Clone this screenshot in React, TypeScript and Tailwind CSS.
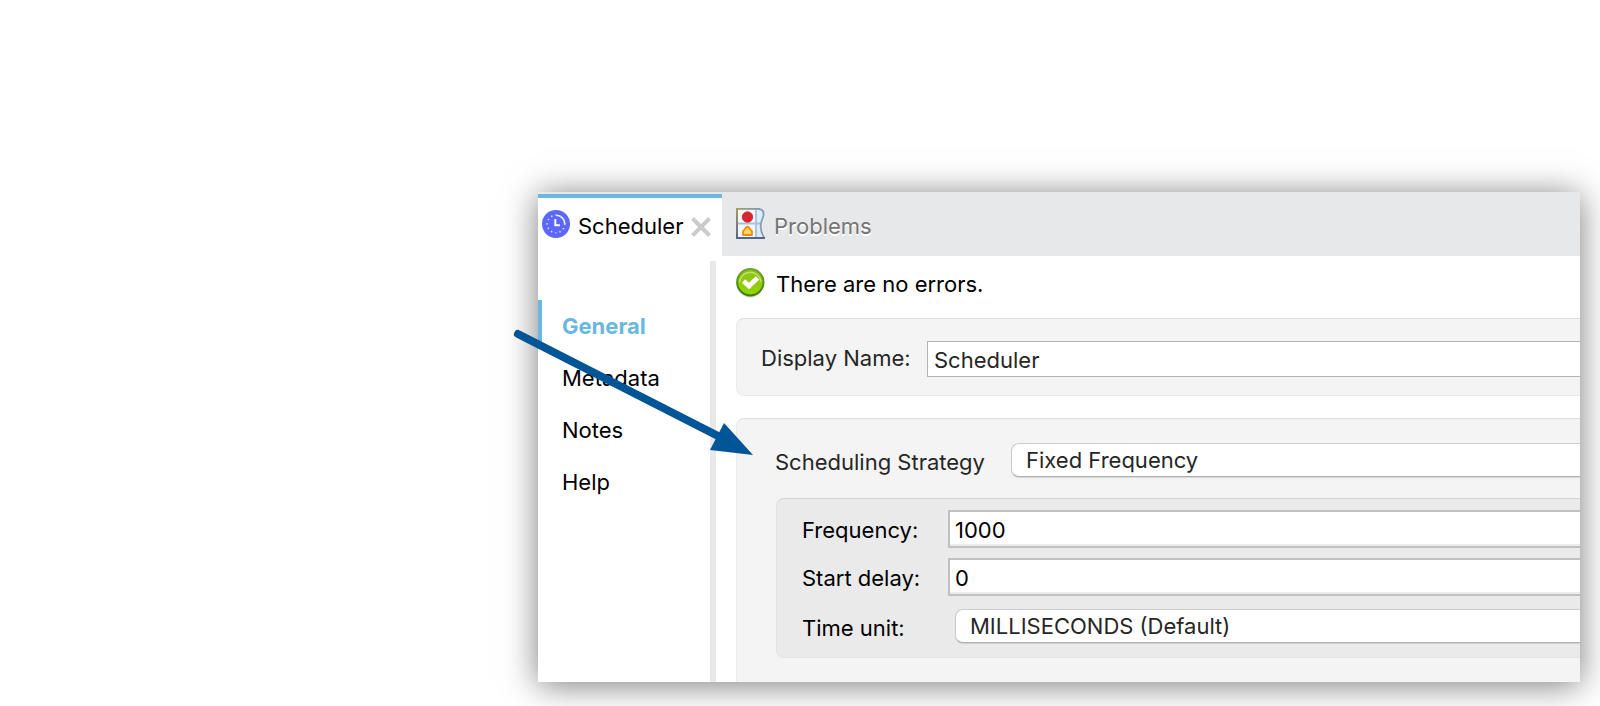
import React from "react";

const sections = ["General", "Metadata", "Notes", "Help"];

function ClockIcon() {
  return (
    <svg viewBox="0 0 29 29" className="size-7 shrink-0" aria-hidden="true">
      <circle cx="14.5" cy="14.5" r="14.5" fill="#5c67fb" />
      <path d="M14.5 5.4a9.1 9.1 0 0 1 9.1 9.1" fill="none" stroke="#fff" strokeWidth="1.7" />
      <path
        d="M14.5 23.6a9.1 9.1 0 1 1 9.1-9.1 9.1 9.1 0 0 1-9.1 9.1"
        fill="none"
        stroke="#d5d8ff"
        strokeWidth="1.6"
        strokeDasharray="1.6 3.17"
        strokeDashoffset="0.8"
      />
      <path d="M13.8 9.2v6.6h4.8" fill="none" stroke="#fff" strokeWidth="2" />
    </svg>
  );
}

function ProblemsIcon() {
  return (
    <svg viewBox="0 0 30 31" className="h-[31px] w-[30px] shrink-0" aria-hidden="true">
      <defs>
        <linearGradient id="frame" x1="0" y1="0" x2="0" y2="1">
          <stop offset="0" stopColor="#b09a5c" />
          <stop offset="1" stopColor="#52648f" />
        </linearGradient>
        <linearGradient id="edge" x1="0" y1="0" x2="1" y2="0">
          <stop offset="0" stopColor="#b09a5c" />
          <stop offset="1" stopColor="#8496b5" />
        </linearGradient>
      </defs>
      <path d="M1 1H23C28 1 28.5 6 26.5 10.5C23.500 17 24 23 28 30H1z" fill="#dceefa" />
      <path d="M2 2H19V29H2z" fill="#f3f8fb" />
      <path d="M20 2V29M2 15.5H24.500" stroke="#a9bfe0" strokeWidth="1.8" fill="none" />
      <path d="M23 1.2C28 1.2 28.5 6 26.5 10.5C23.500 17 24 23 28 29.500" stroke="#8799b8" strokeWidth="1.8" fill="none" />
      <path d="M0 0H24V1.800H0z" fill="url(#edge)" />
      <path d="M0 0H2V31H0z" fill="url(#frame)" />
      <path d="M0 29H29V31H0z" fill="#52648f" />
      <circle cx="11.5" cy="9" r="5.2" fill="#dc2430" stroke="#bd1f2d" strokeWidth="0.8" />
      <path d="M7 27V23.5L10 19.500Q11.500 18 13 19.500L16 23.500V27z" fill="#ffd75a" stroke="#f08a12" strokeWidth="1.800" strokeLinejoin="round" />
    </svg>
  );
}

function OkIcon() {
  return (
    <svg viewBox="0 0 30 30" className="size-[30px] shrink-0" aria-hidden="true">
      <defs>
        <linearGradient id="ok" x1="0" y1="0" x2="0" y2="1">
          <stop offset="0" stopColor="#8fbf1c" />
          <stop offset="1" stopColor="#8ed800" />
        </linearGradient>
        <linearGradient id="rim" x1="0" y1="0" x2="0" y2="1">
          <stop offset="0" stopColor="#6fa52c" />
          <stop offset="1" stopColor="#3f7d08" />
        </linearGradient>
      </defs>
      <ellipse cx="14.3" cy="16.5" rx="13" ry="13" fill="#000" opacity="0.18" />
      <circle cx="14.3" cy="14.2" r="13.2" fill="url(#ok)" stroke="url(#rim)" strokeWidth="2" />
      <path d="M3.500 14A10.800 10.800 0 0 1 25 14" fill="none" stroke="#d0e884" strokeWidth="1.300" opacity="0.8" />
      <path d="M7.500 13L13 18L21.500 10" fill="none" stroke="#fff" strokeWidth="4.800" />
    </svg>
  );
}

export default function App() {
  return (
    <div className="relative min-h-screen overflow-hidden bg-white pt-48 pr-5 pb-6 pl-[538px] font-['Inter','Liberation_Sans',sans-serif] text-[22px] leading-7 text-black">
      <div className="overflow-hidden bg-white shadow-[0_3px_32px_rgba(0,0,0,0.52)]">
        <header className="flex h-16 bg-[#e7e8ea] pt-0.5">
          <div className="flex w-[184px] shrink-0 items-center gap-2 border-t-4 border-[#6ab7df] bg-white pb-1.5 pl-1">
            <ClockIcon />
            <button type="button" className="pt-1">Scheduler</button>
            <button type="button" aria-label="Close Scheduler" className="pt-1.5">
              <svg viewBox="0 0 20 20" className="size-5" aria-hidden="true">
                <path d="M1.5 1.5l17 17M18.5 1.5l-17 17" stroke="#cbcbcb" strokeWidth="4" />
              </svg>
            </button>
          </div>
          <div className="flex items-center gap-2 pb-1 pl-3.5">
            <ProblemsIcon />
            <button type="button" className="pt-1.5 text-[#757575] [text-shadow:0_2px_0_#fff]">Problems</button>
          </div>
        </header>

        <div className="flex">
          <nav className="w-[172px] shrink-0 pt-11">
            {sections.map((name, i) => (
              <a
                key={name}
                href={"#" + name.toLowerCase()}
                className={
                  i === 0
                    ? "mb-1 flex h-12 items-center border-l-4 border-[#6ab7df] pt-1 pl-5 font-bold text-[#6ab7df]"
                    : "flex h-[52px] items-center pl-6"
                }
              >
                {name}
              </a>
            ))}
          </nav>
          <div className="mt-[5px] w-1.5 shrink-0 bg-[#e7e8ea]" />

          <main className="min-w-0 flex-1 pl-5">
            <div className="flex h-[62px] items-center gap-2.5 pb-2">
              <OkIcon />
              <span className="pt-0.5">There are no errors.</span>
            </div>

            <section className="flex h-[78px] items-center rounded-l-lg border border-r-0 border-[#ebebeb] border-t-[#dedede] bg-[#f4f4f4] pt-1 pl-6 text-[#262626]">
              <label htmlFor="display-name" className="w-[166px] shrink-0 pb-0.5">Display Name:</label>
              <input
                id="display-name"
                defaultValue="Scheduler"
                className="h-9 min-w-0 flex-1 border border-r-0 border-[#b4b4b4] bg-white pt-0.5 pl-1.5 outline-none"
              />
            </section>

            <section className="mt-[22px] rounded-tl-lg border-t border-l border-[#ebebeb] border-t-[#dedede] bg-[#f4f4f4] pt-6 pb-6 pl-[38px] text-[#262626]">
              <div className="flex h-[34px] items-center">
                <label htmlFor="strategy" className="w-[236px] shrink-0 pt-1">Scheduling Strategy</label>
                <select
                  id="strategy"
                  className="h-[34px] min-w-0 flex-1 appearance-none rounded-l-lg border border-r-0 border-[#cccccc] border-b-[#b0b0b0] bg-white pl-3.5 shadow-[0_1px_1px_rgba(0,0,0,0.12)] outline-none"
                >
                  <option>Fixed Frequency</option>
                </select>
              </div>

              <div className="mt-[21px] ml-px rounded-l-lg border border-r-0 border-[#e2e2e2] border-t-[#d4d4d4] bg-[#eaeaea] pt-[11px] pb-3.5 pl-[25px] text-black">
                <div className="flex items-center">
                  <label htmlFor="frequency" className="w-[146px] shrink-0 pt-0.5">Frequency:</label>
                  <input
                    id="frequency"
                    defaultValue="1000"
                    className="h-[38px] min-w-0 flex-1 border-2 border-r-0 border-[#c1c1c1] bg-white pt-0.5 pl-[5px] shadow-[inset_0_-2px_0_#ececec] outline-none"
                  />
                </div>
                <div className="mt-2.5 flex items-center">
                  <label htmlFor="delay" className="w-[146px] shrink-0 pt-0.5">Start delay:</label>
                  <input
                    id="delay"
                    defaultValue="0"
                    className="h-[38px] min-w-0 flex-1 border-2 border-r-0 border-[#c1c1c1] bg-white pt-0.5 pl-[5px] shadow-[inset_0_-2px_0_#ececec] outline-none"
                  />
                </div>
                <div className="mt-[13px] flex h-[34px] items-center">
                  <label htmlFor="unit" className="w-[153px] shrink-0 pt-1">Time unit:</label>
                  <select
                    id="unit"
                    className="h-[34px] min-w-0 flex-1 appearance-none rounded-l-lg border border-r-0 border-[#cccccc] border-b-[#b0b0b0] bg-white pl-3.5 text-[#262626] shadow-[0_1px_1px_rgba(0,0,0,0.12)] outline-none"
                  >
                    <option>MILLISECONDS (Default)</option>
                  </select>
                </div>
              </div>
            </section>
          </main>
        </div>
      </div>

      <svg viewBox="0 0 244 132" className="pointer-events-none absolute top-[328px] left-[512px] h-[132px] w-[244px]" aria-hidden="true">
        <path d="M6 6L210 110" stroke="#005596" strokeWidth="8" strokeLinecap="round" />
        <path d="M241 127L212 95 198 122z" fill="#005596" />
      </svg>
    </div>
  );
}
